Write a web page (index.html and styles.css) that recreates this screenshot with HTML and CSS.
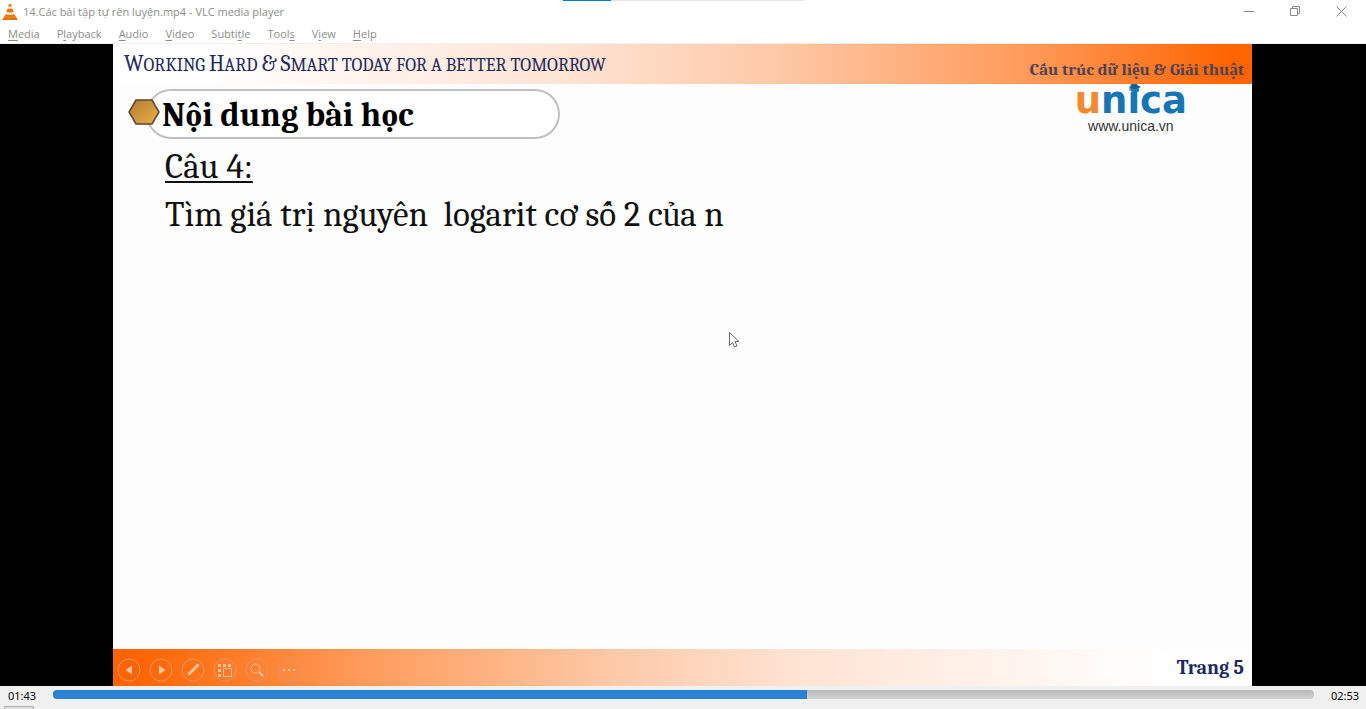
FILE: index.html
```html
<!DOCTYPE html>
<html lang="vi">
<head>
<meta charset="utf-8">
<title>14.Các bài tập tự rèn luyện.mp4 - VLC media player</title>
<link rel="stylesheet" href="styles.css">
</head>
<body>
<div class="player">
  <div class="top-progress"></div>
  <header class="titlebar">
    <svg class="cone" width="16" height="18" viewBox="0 0 16 18" aria-hidden="true">
      <path d="M3 12h10l2.500 4.500q0 .5-.5.5H1q-.5 0-.5-.5z" fill="#f07d10"/>
      <path d="M7 1h2l4 12q-5 2.500-10 0z" fill="#e9e9e6"/>
      <path d="M7 1h2l.8 2.500H6.200zM5.400 5.800h5.200l1 3q-3.600 1.200-7.200 0zM3.600 11.200q4.400 1.500 8.800 0l.7 2q-5.100 2.300-10.200 0z" fill="#ee7410"/>
      <path d="M1 16h14" stroke="#c9650d"/>
    </svg>
    <h1 class="window-title">14.Các bài tập tự rèn luyện.mp4 - VLC media player</h1>
    <div class="window-buttons">
      <button class="window-button" aria-label="Minimize"><svg width="11" height="11" viewBox="0 0 11 11"><path d="M0 5.500h10"/></svg></button>
      <button class="window-button" aria-label="Restore"><svg width="11" height="11" viewBox="0 0 11 11"><path d="M.5 2.500h7v7h-7zM2.500 2.500v-2h7v7h-2"/></svg></button>
      <button class="window-button" aria-label="Close"><svg width="11" height="11" viewBox="0 0 11 11"><path d="M.5.5l10 10M10.500.5l-10 10"/></svg></button>
    </div>
  </header>
  <nav class="menubar">
    <button class="menu"><u>M</u>edia</button>
    <button class="menu">P<u>l</u>ayback</button>
    <button class="menu"><u>A</u>udio</button>
    <button class="menu"><u>V</u>ideo</button>
    <button class="menu">Subti<u>t</u>le</button>
    <button class="menu">Tool<u>s</u></button>
    <button class="menu">V<u>i</u>ew</button>
    <button class="menu"><u>H</u>elp</button>
  </nav>
  <main class="video">
    <section class="slide">
      <div class="slide-header">
        <p class="motto"><span class="cap">W</span>orking <span class="cap">H</span>ard <span class="cap">&amp;</span> <span class="cap">S</span>mart today for a better tomorrow</p>
        <p class="course">Cấu trúc dữ liệu &amp; Giải thuật</p>
      </div>
      <div class="slide-top">
        <div class="heading">
          <svg class="hexagon" width="32" height="28" viewBox="0 0 32 28" aria-hidden="true">
            <defs><linearGradient id="gold" x1="0" y1="0" x2="1" y2="1"><stop offset="0" stop-color="#b27b2f"/><stop offset="1" stop-color="#edb04a"/></linearGradient></defs>
            <path d="M8 2h16l7 12-7 12H8L1 14z" fill="url(#gold)" stroke="#554432" stroke-width="1.500"/>
          </svg>
          <h2 class="heading-box">Nội dung bài học</h2>
        </div>
        <div class="brand">
          <div class="logo"><span class="logo-u">u</span>nica
            <svg class="hat" width="12" height="10" viewBox="0 0 12 10" aria-hidden="true"><path d="M0 3l6-3 6 3-6 3z" fill="#145f95"/><path d="M2 4v3q4 3 8 0V4L6 6z" fill="#1676b5"/><path d="M1 3v4" stroke="#145f95"/></svg>
          </div>
          <div class="site">www.unica.vn</div>
        </div>
      </div>
      <div class="content">
        <p class="line"><u>Câu 4:</u></p>
        <p class="line">Tìm giá trị nguyên&nbsp; logarit cơ số 2 của n</p>
      </div>
      <footer class="slide-footer">
        <div class="tools">
          <button class="tool" aria-label="Previous"><svg viewBox="0 0 24 24"><circle cx="12" cy="12" r="11"/><path class="solid" d="M15 7.500v9L8.500 12z"/></svg></button>
          <button class="tool" aria-label="Next"><svg viewBox="0 0 24 24"><circle cx="12" cy="12" r="11"/><path class="solid" d="M10 7.500v9l6.500-4.500z"/></svg></button>
          <button class="tool" aria-label="Pen"><svg viewBox="0 0 24 24"><circle cx="12" cy="12" r="11"/><path class="thick" d="M7.500 16.500l10-10"/><path d="M6 18l2-1"/></svg></button>
          <button class="tool" aria-label="All slides"><svg viewBox="0 0 24 24"><circle cx="12" cy="12" r="11"/><path class="solid" d="M5 6h3v3H5zM10 6h3v3h-3zM15 6h3v3h-3zM5 11h3v3H5zM5 16h3v3H5z"/><path class="frame" d="M10.500 10.500h8v8h-8z"/></svg></button>
          <button class="tool" aria-label="Zoom"><svg viewBox="0 0 24 24"><circle cx="12" cy="12" r="11"/><circle class="frame" cx="10.500" cy="10.500" r="4.500"/><path class="bold" d="M14 14l4 4"/></svg></button>
          <button class="tool" aria-label="More"><svg viewBox="0 0 24 24"><circle cx="12" cy="12" r="11"/><path class="solid" d="M6 11h2v2H6zM11 11h2v2h-2zM16 11h2v2h-2z"/></svg></button>
        </div>
        <p class="page-number">Trang 5</p>
      </footer>
      <svg class="cursor" width="12" height="18" viewBox="0 0 12 18" aria-hidden="true"><path d="M1.500 1.500v13l3-3 2 4.500 2.500-1-2-4.500h4z" fill="#fff" stroke="#666"/></svg>
    </section>
  </main>
  <div class="controls">
    <div class="seek-row">
      <span class="time">01:43</span>
      <input class="seek" type="range" min="0" max="1000" value="598" aria-label="Position">
      <span class="time">02:53</span>
    </div>
    <button class="play" aria-label="Play"></button>
  </div>
</div>
</body>
</html>
```
FILE: styles.css
```css
* { box-sizing: border-box; }
body {
  margin: 0;
  font-family: "Open Sans", "Noto Sans", sans-serif;
}
h1, h2, p { margin: 0; }
button {
  padding: 0;
  border: 0;
  background: none;
  color: inherit;
  font: inherit;
}
.player {
  position: relative;
  display: flex;
  flex-direction: column;
  height: 100vh;
  overflow: hidden;
  background: #fff;
}
.top-progress {
  position: absolute;
  top: 0;
  left: 50%;
  width: 241px;
  height: 1px;
  margin-left: -120px;
  background: linear-gradient(to right, #0078d7 20%, #e6e6e6 20%);
}
.titlebar {
  display: flex;
  align-items: center;
  height: 23px;
  padding-left: 2px;
  color: #8c8c8c;
}
.cone { margin-right: 5px; }
.window-title {
  flex: 1;
  font-size: 11px;
  font-weight: 400;
}
.window-buttons {
  display: flex;
  padding-right: 2px;
}
.window-button {
  display: flex;
  align-items: center;
  justify-content: center;
  width: 46px;
  height: 20px;
}
.window-button svg {
  fill: none;
  stroke: #888;
}
.menubar {
  display: flex;
  gap: 17px;
  height: 21px;
  padding-left: 8px;
  border-bottom: 1px solid #f0f0f0;
  color: #8c8c8c;
  font-size: 11px;
  line-height: 21px;
}
.menu u { text-underline-offset: 2px; }
.video {
  flex: 1;
  display: flex;
  justify-content: center;
  min-height: 0;
  padding-right: 1px;
  background: #000;
}
.slide {
  position: relative;
  display: flex;
  flex-direction: column;
  height: 100%;
  aspect-ratio: 1139 / 642;
  background: #fdfdfd;
  color: #111;
  font-family: Cambria, Caladea, "Liberation Serif", serif;
}
.slide-header {
  display: flex;
  justify-content: space-between;
  height: 40px;
  padding: 0 8px 0 11px;
  background: linear-gradient(to right, #fff 8%, #fee3d3 40%, #fdc9a8 58%, #ff9b5c 80%, #ff6400 98%);
  color: #1f2a5c;
}
.motto {
  font-size: 18px;
  line-height: 40px;
  text-transform: uppercase;
}
.cap { font-size: 22px; }
.course {
  color: #4b4253;
  font-size: 17px;
  font-weight: 700;
  line-height: 52px;
}
.slide-top {
  display: flex;
  justify-content: space-between;
  height: 59px;
  padding: 0 65px 0 15px;
}
.heading {
  display: flex;
  align-items: flex-start;
  padding-top: 5px;
}
.hexagon {
  z-index: 1;
  margin: 9px -14px 0 0;
}
.heading-box {
  width: 414px;
  height: 50px;
  padding-left: 14px;
  border: 2px solid #c0c0c0;
  border-radius: 25px;
  background: #fff;
  color: #000;
  font-size: 34px;
  line-height: 48px;
}
.brand {
  color: #333;
  font-family: "Liberation Sans", sans-serif;
  text-align: center;
}
.logo {
  position: relative;
  height: 34px;
  color: #1676b5;
  font-family: "DejaVu Sans", sans-serif;
  font-size: 37px;
  font-weight: 700;
  line-height: 34px;
}
.logo-u { color: #f58a2c; }
.hat {
  position: absolute;
  top: 0;
  left: 50%;
  margin-left: -2px;
}
.site {
  font-size: 14px;
  line-height: 16px;
}
.content {
  flex: 1;
  padding: 0 52px;
  font-size: 35px;
  line-height: 48px;
}
.line u {
  text-decoration-thickness: 2px;
  text-underline-offset: 3px;
}
.slide-footer {
  display: flex;
  align-items: center;
  justify-content: space-between;
  height: 37px;
  padding: 0 8px 0 4px;
  background: linear-gradient(to right, #ff6400 2%, #ff9b5c 22%, #fdc9a8 44%, #fee3d3 60%, #fff 92%);
}
.tools {
  display: flex;
  gap: 8px;
  padding-top: 4px;
}
.tool {
  width: 24px;
  height: 24px;
}
.tool svg {
  display: block;
  fill: none;
  stroke: #d8976b;
}
.tool .solid {
  fill: #ffc6a1;
  stroke: none;
}
.tool .frame { stroke: #f3bd98; }
.tool .thick {
  stroke: #ffc6a1;
  stroke-width: 3;
}
.tool .bold {
  stroke: #ffcaa8;
  stroke-width: 2;
}
.page-number {
  color: #1c2860;
  font-size: 20px;
  font-weight: 700;
}
.cursor {
  position: absolute;
  top: 287px;
  left: 615px;
}
.controls {
  height: 23px;
  padding: 0 7px 0 8px;
  overflow: hidden;
  background: #f0f0f0;
}
.seek-row {
  display: flex;
  gap: 17px;
  height: 20px;
}
.time {
  color: #000;
  font-family: "Noto Sans", sans-serif;
  font-size: 11px;
  line-height: 20px;
}
.seek {
  flex: 1;
  height: 9px;
  margin: 4px 0 0;
  appearance: none;
  border-radius: 4px;
  background: linear-gradient(to right, #2982d3 59.8%, transparent 59.8%), linear-gradient(#b8b8b8, #d2d2d2);
}
.seek::-webkit-slider-thumb {
  appearance: none;
  width: 1px;
  height: 9px;
  background: transparent;
}
.play {
  display: block;
  width: 30px;
  height: 30px;
  margin-left: -4px;
  border: 1px solid #adadad;
  background: #e1e1e1;
}
```
